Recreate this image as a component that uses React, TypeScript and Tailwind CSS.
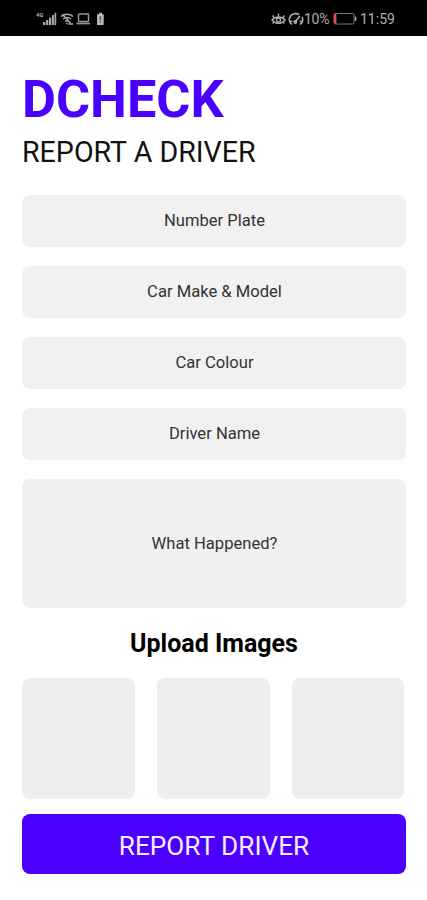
const fields = ["Number Plate", "Car Make & Model", "Car Colour", "Driver Name"];

function SignalIcon() {
  return (
    <svg className="h-[15px] w-[14px]" viewBox="0 0 14 15" fill="#a8a8a8">
      <path d="M0 10h2.300v3H0zM3 8h2.300v5H3zM6 5.500h2.300V13H6zM9 3h1.900v10H9zM11.500 .8h1.700V13h-1.700z" />
    </svg>
  );
}

function WifiIcon() {
  return (
    <svg className="h-[14px] w-[14px]" viewBox="0 0 14 14" fill="none" stroke="#aaa" strokeWidth="1.500">
      <path d="M1 4.500C4 1.500 9.500 1.500 13 4.500M3 7c2.500-2 5.500-2 8 0M5 9.500c1.200-1 2.600-1 3.800 0M2.500 2.500l8 8.500M6 11.500h1.500M8.500 12h4.500" />
    </svg>
  );
}

function LaptopIcon() {
  return (
    <svg className="h-[14px] w-[15px]" viewBox="0 0 15 14" fill="none" stroke="#999" strokeWidth="1.500">
      <rect x="2.500" y="2" width="10" height="7.500" rx=".7" />
      <path d="M.5 11.500h13.500" strokeWidth="1.700" />
    </svg>
  );
}

function SmallBatteryIcon() {
  return (
    <svg className="h-[14px] w-[9px]" viewBox="0 0 9 14">
      <path d="M3 .8h3v1.400h1.700V13H1V2.200h2z" fill="#b8b8b8" />
      <path d="M4.300 4.300v4M4.300 9.500v1.300" stroke="#444" strokeWidth="1.200" />
    </svg>
  );
}

function EyeIcon() {
  return (
    <svg className="h-[14px] w-[15px]" viewBox="0 0 15 14" fill="none" stroke="#b0b0b0" strokeWidth="1.300">
      <path d="M1 8c3.500-4 9.500-4 13 0-3.500 4.500-9.500 4.500-13 0zM1.500 3.500l2 2.500M7.500 1.500v3M13.500 3.500l-2 2.500M3 10l-1.500 1.500M12 10l1.500 1.500" />
      <circle cx="7.500" cy="8" r="2" />
    </svg>
  );
}

function GaugeIcon() {
  return (
    <svg className="h-[14px] w-[16px]" viewBox="0 0 16 14" fill="none" stroke="#b0b0b0" strokeWidth="1.500">
      <path d="M4 12.500C-.5 9.500 1 2 7.500 1.500c1.500 0 2.800.4 3.800 1.200M14 5c1.300 3 .4 6-2 7.500M2.300 9.800l2-1M13.700 9.800l-2-1" />
      <path d="M7 10l5-6" strokeWidth="1.600" />
      <circle cx="7.300" cy="10" r="1.200" />
    </svg>
  );
}

function LowBatteryIcon() {
  return (
    <svg className="h-[14px] w-[24px]" viewBox="0 0 24 14" fill="none" stroke="#777">
      <rect x="1" y="1.500" width="20" height="10.500" rx="1.500" />
      <path d="M22.500 4.500v4.500" stroke="#aaa" strokeWidth="1.500" />
      <path d="M2.200 2v9.500" stroke="#ed4848" strokeWidth="2.400" />
    </svg>
  );
}

export default function App() {
  return (
    <main className="h-[900px] w-[427px] overflow-hidden bg-white font-['Roboto',sans-serif] text-black">
      <header className="flex h-9 items-center justify-between bg-black pr-[32px] pl-[36px] text-[#b0b0b0]">
        <div className="flex items-center pt-0.5">
          <span className="h-[17px] w-[7px] text-[6px] leading-[8px] font-bold">4G</span>
          <SignalIcon />
          <span className="ml-[3px] flex"><WifiIcon /></span>
          <span className="ml-[2px] flex"><LaptopIcon /></span>
          <span className="ml-[5px] flex"><SmallBatteryIcon /></span>
        </div>
        <div className="flex items-center pt-0.5">
          <span className="-ml-[2px] flex"><EyeIcon /></span>
          <span className="ml-[2px] flex"><GaugeIcon /></span>
          <span className="w-[29px] text-[14px] leading-4 tracking-[-0.3px]">10%</span>
          <LowBatteryIcon />
          <span className="ml-[3px] w-[35px] text-[14px] leading-4 whitespace-nowrap">11:59</span>
        </div>
      </header>
      <div className="flex flex-col pr-[21px] pl-[22px]">
        <h1 className="mt-[34px] h-[60px] text-[52.200px] leading-[60px] font-bold text-[#4800ff]">DCHECK</h1>
        <h2 className="mt-[6px] h-8 text-[28.600px] leading-8 whitespace-nowrap text-[#111]">REPORT A DRIVER</h2>
        <form className="mt-[27px] flex flex-col">
          <div className="flex flex-col gap-[19.500px]">
            {fields.map((field) => (
              <div key={field} className="flex h-[51.500px] items-center justify-center rounded-lg bg-[#f1f1f1] pt-[2px] pl-px text-[16.600px] text-[#333]">
                {field}
              </div>
            ))}
            <div className="flex h-[129px] items-center justify-center rounded-lg bg-[#f0f0f0] pt-[2px] pl-px text-[16.600px] text-[#333]">
              What Happened?
            </div>
          </div>
          <h3 className="mt-[20px] h-8 text-center text-[25px] leading-8 font-bold">Upload Images</h3>
          <div className="mt-[18px] flex gap-[22px]">
            <div className="h-[121px] w-[113px] rounded-lg bg-[#eee]" />
            <div className="h-[121px] w-[113px] rounded-lg bg-[#eee]" />
            <div className="h-[121px] w-[112px] rounded-lg bg-[#eee]" />
          </div>
          <button type="button" className="mt-[15px] h-[60px] rounded-lg bg-[#4b00ff] pt-[3px] text-[26.200px] leading-8 text-[#f5edff]">
            REPORT DRIVER
          </button>
        </form>
      </div>
    </main>
  );
}
